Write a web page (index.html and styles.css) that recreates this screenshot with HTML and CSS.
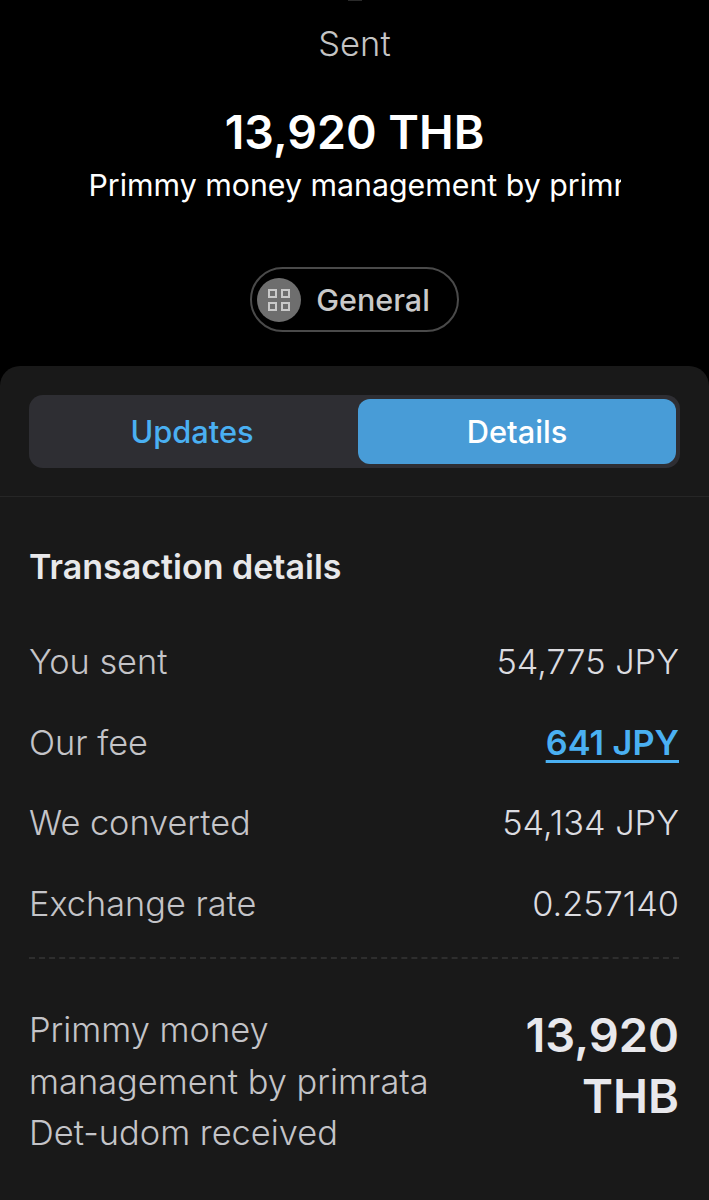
FILE: index.html
```html
<!DOCTYPE html>
<html lang="en">
<head>
    <meta charset="UTF-8">
    <meta name="viewport" content="width=device-width, initial-scale=1.0">
    <title>Transfer details</title>
    <link rel="stylesheet" href="styles.css">
</head>
<body>
    <header class="hero">
        <div class="handle"></div>
        <p class="status">Sent</p>
        <h1 class="amount">13,920 THB</h1>
        <p class="recipient">Primmy money management by primr</p>
        <div class="chip">
            <span class="chip-icon">
                <svg width="22" height="22" viewBox="0 0 22 22" fill="none" stroke="#c9c9c9" stroke-width="2">
                    <rect x="1" y="1" width="7" height="7"/>
                    <rect x="14" y="1" width="7" height="7"/>
                    <rect x="1" y="14" width="7" height="7"/>
                    <rect x="14" y="14" width="7" height="7"/>
                </svg>
            </span>
            <span class="chip-label">General</span>
        </div>
    </header>

    <main class="sheet">
        <div class="tabs-wrap">
            <div class="tabs">
                <div class="tab">Updates</div>
                <div class="tab active">Details</div>
            </div>
        </div>
        <section class="details">
            <h2 class="details-title">Transaction details</h2>
            <div class="row"><span>You sent</span><span class="val">54,775 JPY</span></div>
            <div class="row"><span>Our fee</span><a class="fee" href="#">641 JPY</a></div>
            <div class="row"><span>We converted</span><span class="val">54,134 JPY</span></div>
            <div class="row"><span>Exchange rate</span><span class="val">0.257140</span></div>
            <div class="total">
                <div class="total-label">Primmy money management by primrata Det-udom received</div>
                <div class="total-val">13,920 THB</div>
            </div>
        </section>
    </main>
</body>
</html>
```

FILE: styles.css
```css
body {
    margin: 0;
    height: 1200px;
    overflow: hidden;
    background-color: #000;
    font-family: Inter, "Liberation Sans", sans-serif;
    display: flex;
    flex-direction: column;
}
p, h1, h2 {
    margin: 0;
}
.hero {
    display: flex;
    flex-direction: column;
    align-items: center;
    height: 366px;
    box-sizing: border-box;
}
.handle {
    width: 14px;
    height: 1px;
    margin-bottom: 23px;
    background-color: #2a2a2a;
}
.status {
    font-size: 34.5px;
    line-height: 40px;
    color: #c4c4c4;
    font-weight: 300;
}
.amount {
    margin-top: 40px;
    font-size: 46.5px;
    line-height: 56px;
    font-weight: 600;
    color: #fff;
}
.recipient {
    width: 532px;
    margin-top: 5px;
    font-size: 30.3px;
    line-height: 40px;
    color: #fff;
    white-space: nowrap;
    overflow: hidden;
}
.chip {
    display: flex;
    align-items: center;
    gap: 15px;
    margin-top: 62px;
    height: 65px;
    box-sizing: border-box;
    padding: 0 27px 0 5px;
    border: 2px solid #4a4a4a;
    border-radius: 33px;
}
.chip-icon {
    display: flex;
    align-items: center;
    justify-content: center;
    width: 44px;
    height: 44px;
    border-radius: 50%;
    background-color: #6e6e6e;
}
.chip-label {
    font-size: 30.5px;
    font-weight: 500;
    color: #c9c9c9;
}
.sheet {
    flex: 1;
    background-color: #191919;
    border-radius: 20px 20px 0 0;
}
.tabs-wrap {
    padding: 29px 29px 28px 29px;
    border-bottom: 1px solid #262626;
}
.tabs {
    display: flex;
    height: 73px;
    box-sizing: border-box;
    padding: 4px 4px 4px 0;
    background-color: #2e2e33;
    border-radius: 14px;
}
.tab {
    flex: 1;
    display: flex;
    align-items: center;
    justify-content: center;
    padding-right: 3px;
    font-size: 30.8px;
    font-weight: 500;
    color: #4ab0f2;
}
.tab.active {
    flex: 0 0 318px;
    padding-right: 0;
    background-color: #489cd7;
    color: #fff;
    border-radius: 12px;
}
.details {
    padding: 48px 30px 0 29px;
}
.details-title {
    font-size: 34px;
    line-height: 44px;
    font-weight: 600;
    color: #e8e8ea;
    margin-bottom: 32px;
}
.row {
    display: flex;
    justify-content: space-between;
    align-items: center;
    height: 80.8px;
    font-size: 34.3px;
    font-weight: 300;
    color: #c4c4c8;
}
.val {
    color: #dcdce0;
}
.fee {
    font-weight: 600;
    color: #4ab0f2;
    text-decoration: underline;
    text-underline-offset: 5px;
}
.total {
    display: flex;
    justify-content: space-between;
    gap: 40px;
    margin-top: 13px;
    padding-top: 45px;
    border-top: 2px dashed #2e2e2e;
}
.total-label {
    width: 420px;
    font-size: 34.4px;
    line-height: 51.5px;
    font-weight: 300;
    color: #c4c4c8;
}
.total-val {
    font-size: 47px;
    line-height: 61px;
    font-weight: 600;
    color: #e8e8ec;
    text-align: right;
    width: 170px;
}
```
